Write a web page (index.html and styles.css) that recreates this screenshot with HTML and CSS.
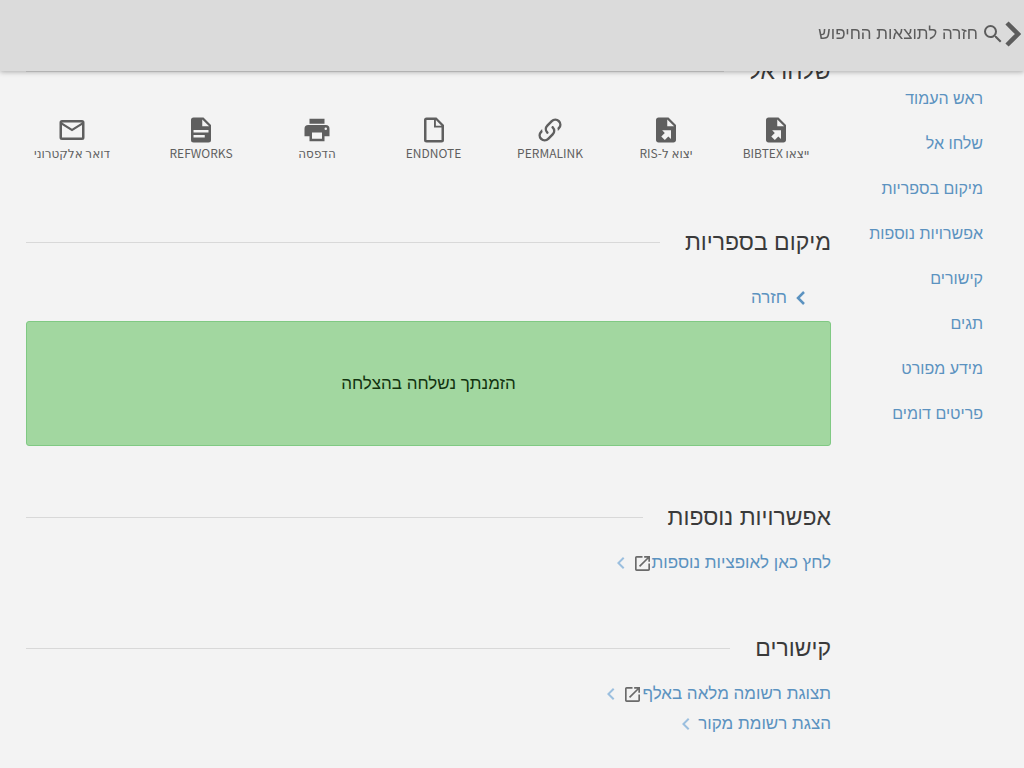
FILE: index.html
```html
<!DOCTYPE html>
<html lang="he" dir="rtl">
<head>
<meta charset="utf-8">
<meta name="viewport" content="width=device-width, initial-scale=1">
<title>מיקום בספריות</title>
<link rel="stylesheet" href="styles.css">
</head>
<body>
<svg class="defs" aria-hidden="true">
  <symbol id="export" viewBox="0 0 24 24"><path fill-rule="evenodd" d="M6 2c-1.100 0-2 .9-2 2v16c0 1.100.9 2 2 2h12c1.100 0 2-.9 2-2V8l-6-6H6zm7 1.500L18.500 9H13V3.500zM8.930 12.220H16v7.070l-2.120-2.120L11.050 20l-2.830-2.830 2.830-2.830-2.120-2.120z"/></symbol>
  <symbol id="open" viewBox="3 3 18 18"><path d="M19 19H5V5h7V3H5c-1.110 0-2 .9-2 2v14c0 1.100.89 2 2 2h14c1.100 0 2-.9 2-2v-7h-2v7zM14 3v2h3.590l-9.830 9.830 1.410 1.410L19 6.410V10h2V3h-7z"/></symbol>
  <symbol id="left" viewBox="0 0 24 24"><path d="M15.410 7.410L14 6l-6 6 6 6 1.410-1.410L10.830 12z"/></symbol>
</svg>
<header class="topbar">
  <button class="topbar-back" type="button">
    <svg class="back-arrow" viewBox="0 0 16 26" aria-hidden="true"><path d="M2 2l11 11L2 24" fill="none" stroke="currentColor" stroke-width="4.500"/></svg>
    <svg class="search-icon" viewBox="0 0 24 24" aria-hidden="true"><path d="M15.500 14h-.79l-.28-.27A6.471 6.471 0 0 0 16 9.500 6.500 6.500 0 1 0 9.500 16c1.610 0 3.090-.59 4.230-1.570l.27.28v.79l5 4.990L20.490 19l-4.990-5zm-6 0C7.010 14 5 11.990 5 9.500S7.010 5 9.500 5 14 7.010 14 9.500 11.990 14 9.500 14z"/></svg>
    <span>חזרה לתוצאות החיפוש</span>
  </button>
</header>
<div class="layout">
  <nav class="side">
    <a href="#top">ראש העמוד</a>
    <a href="#send">שלחו אל</a>
    <a href="#location">מיקום בספריות</a>
    <a href="#more">אפשרויות נוספות</a>
    <a href="#links">קישורים</a>
    <a href="#tags">תגים</a>
    <a href="#details">מידע מפורט</a>
    <a href="#similar">פריטים דומים</a>
  </nav>
  <main class="main">
    <section class="section-send" id="send">
      <h2 class="heading">שלחו אל</h2>
      <div class="actions">
        <button class="action" type="button"><svg viewBox="0 0 24 24" aria-hidden="true"><use href="#export"/></svg><span>ייצאו BIBTEX</span></button>
        <button class="action" type="button"><svg viewBox="0 0 24 24" aria-hidden="true"><use href="#export"/></svg><span>יצוא ל-RIS</span></button>
        <button class="action" type="button"><svg viewBox="0 0 24 24" aria-hidden="true"><path d="M10.590 13.410c.41.39.41 1.030 0 1.420-.39.39-1.030.39-1.420 0a5.003 5.003 0 0 1 0-7.070l3.540-3.540a5.003 5.003 0 0 1 7.070 0 5.003 5.003 0 0 1 0 7.070l-1.490 1.490c.01-.82-.12-1.640-.4-2.420l.47-.48a2.982 2.982 0 0 0 0-4.240 2.982 2.982 0 0 0-4.240 0l-3.530 3.530a2.982 2.982 0 0 0 0 4.240zm2.820-4.240c.39-.39 1.030-.39 1.420 0a5.003 5.003 0 0 1 0 7.070l-3.540 3.540a5.003 5.003 0 0 1-7.070 0 5.003 5.003 0 0 1 0-7.070l1.490-1.490c-.01.82.12 1.640.4 2.430l-.47.47a2.982 2.982 0 0 0 0 4.240 2.982 2.982 0 0 0 4.240 0l3.530-3.530a2.982 2.982 0 0 0 0-4.240.973.973 0 0 1 0-1.420z"/></svg><span>PERMALINK</span></button>
        <button class="action" type="button"><svg viewBox="0 0 24 24" aria-hidden="true"><path fill-rule="evenodd" d="M18 22H6a2 2 0 0 1-2-2V4a2 2 0 0 1 2-2h8l6 6v12a2 2 0 0 1-2 2zM12 4H6v16h12V10h-6V4zm1.500 0v4.500H18z"/></svg><span>ENDNOTE</span></button>
        <button class="action" type="button"><svg viewBox="0 0 24 24" aria-hidden="true"><path fill-rule="evenodd" d="M18 3H6v4h12V3zM19 8H5a3 3 0 0 0-3 3v6h4v4h12v-4h4v-6a3 3 0 0 0-3-3zm-3 11H8v-5h8v5zm3-7a1 1 0 1 1 0-2 1 1 0 0 1 0 2z"/></svg><span>הדפסה</span></button>
        <button class="action" type="button"><svg viewBox="0 0 24 24" aria-hidden="true"><path fill-rule="evenodd" d="M6 2a2 2 0 0 0-2 2v16a2 2 0 0 0 2 2h12a2 2 0 0 0 2-2V8l-6-6H6zm7 1.500L18.500 9H13V3.500zM6 12h12v2H6v-2zm0 4h9v2H6v-2z"/></svg><span>REFWORKS</span></button>
        <button class="action action-last" type="button"><svg viewBox="0 0 24 24" aria-hidden="true"><path fill-rule="evenodd" d="M4 4h16a2 2 0 0 1 2 2v12a2 2 0 0 1-2 2H4a2 2 0 0 1-2-2V6a2 2 0 0 1 2-2zm0 14h16V8l-8 5-8-5v10zM4 6l8 5 8-5H4z"/></svg><span>דואר אלקטרוני</span></button>
      </div>
    </section>
    <section class="section-location" id="location">
      <h2 class="heading">מיקום בספריות</h2>
      <button class="back" type="button"><svg viewBox="0 0 10 16" aria-hidden="true"><path d="M8 2L2 8l6 6" fill="none" stroke="currentColor" stroke-width="2.500"/></svg><span>חזרה</span></button>
      <div class="success" role="status">הזמנתך נשלחה בהצלחה</div>
    </section>
    <section class="section-more" id="more">
      <h2 class="heading">אפשרויות נוספות</h2>
      <a class="link" href="#more"><span>לחץ כאן לאופציות נוספות</span><svg class="open" aria-hidden="true"><use href="#open"/></svg><svg class="chevron" aria-hidden="true"><use href="#left"/></svg></a>
    </section>
    <section class="section-links" id="links">
      <h2 class="heading">קישורים</h2>
      <a class="link" href="#links"><span>תצוגת רשומה מלאה באלף</span><svg class="open" aria-hidden="true"><use href="#open"/></svg><svg class="chevron" aria-hidden="true"><use href="#left"/></svg></a>
      <a class="link" href="#links"><span>הצגת רשומת מקור</span><svg class="chevron" aria-hidden="true"><use href="#left"/></svg></a>
    </section>
  </main>
</div>
</body>
</html>
```
FILE: styles.css
```css
* { box-sizing: border-box; }
body {
  margin: 0;
  background: #f3f3f3;
  color: #3a3a3a;
  font: 17px/30px "Liberation Sans", Arial, sans-serif;
}
button {
  border: 0;
  padding: 0;
  background: none;
  color: inherit;
  font: inherit;
  cursor: pointer;
}
a { color: #5b92c0; text-decoration: none; }
svg { display: block; flex: none; fill: currentColor; }
.defs { position: absolute; width: 0; height: 0; }
.topbar {
  position: fixed;
  inset: 0 0 auto 0;
  display: flex;
  align-items: center;
  height: 71px;
  padding: 0 3px 3px;
  background: #dbdbdb;
  color: #5c5c5c;
  box-shadow: 0 1px 5px rgba(0, 0, 0, .3);
}
.topbar-back { display: flex; align-items: center; }
.back-arrow { width: 16px; height: 26px; }
.search-icon { width: 24px; height: 24px; margin-left: 3px; }
.layout { display: flex; padding: 55px 41px 0 26px; }
.side {
  display: flex;
  flex-direction: column;
  gap: 15px;
  width: 152px;
  padding-top: 29px;
  font-size: 16px;
}
.main { flex: 1; min-width: 0; }
.heading {
  display: flex;
  align-items: center;
  gap: 25px;
  margin: 0;
  font-size: 23px;
  font-weight: 400;
  line-height: 32px;
}
.heading::after { content: ""; flex: 1; border-top: 1px solid #d8d8d8; }
.actions {
  display: grid;
  grid-template-columns: 110fr 110fr 122fr 111fr 122fr 110fr 120fr;
  margin-top: 28px;
}
.action {
  display: flex;
  flex-direction: column;
  align-items: center;
  color: #5f5f5f;
  font: 12px/16px "Noto Sans CJK JP", "DejaVu Sans", sans-serif;
  white-space: nowrap;
}
.action svg { width: 30px; height: 30px; }
.action-last { justify-self: end; padding: 0 8px; }
.section-location { padding-top: 65px; }
.back {
  display: flex;
  align-items: center;
  gap: 9px;
  margin: 25px 25px 8px;
  color: #5b92c0;
}
.back svg { width: 10px; height: 16px; }
.success {
  display: grid;
  place-items: center;
  min-height: 125px;
  border: 1px solid #80c983;
  border-radius: 3px;
  background: #a2d7a0;
  color: #12330f;
}
.section-more { padding-top: 55px; }
.section-links { padding-top: 54px; }
.link { display: flex; align-items: center; }
.section-more .heading, .section-links .heading { margin-bottom: 15px; }
.open { width: 15px; height: 15px; margin: 0 2px; color: #6a6a6a; }
.chevron { width: 24px; height: 24px; color: #9bbfdf; }
```
